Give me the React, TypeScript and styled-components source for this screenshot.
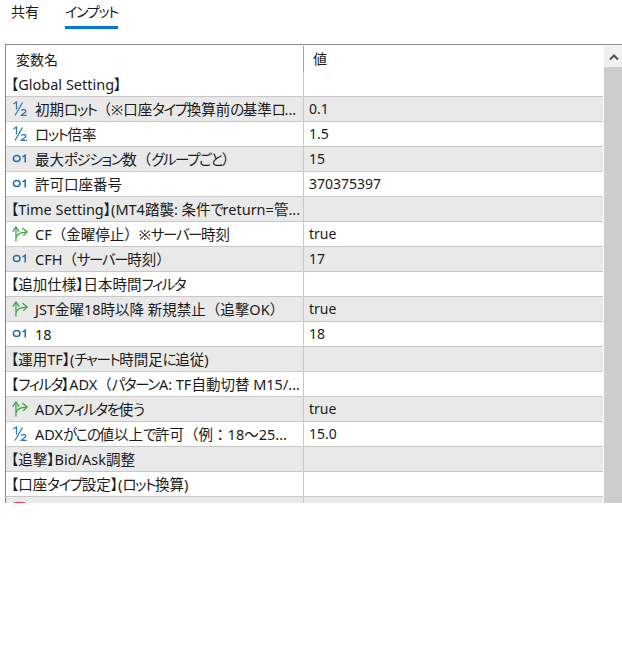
import { createGlobalStyle, styled } from "styled-components";

type IconKind = "half" | "int" | "bool" | "flag" | "none";

interface RowType {
    name: string;
    value?: string;
    icon: IconKind;
}

const rows: RowType[] = [
    { name: "【Global Setting】", icon: "none" },
    { name: "初期ロット（※口座タイプ換算前の基準ロ...", value: "0.1", icon: "half" },
    { name: "ロット倍率", value: "1.5", icon: "half" },
    { name: "最大ポジション数（グループごと）", value: "15", icon: "int" },
    { name: "許可口座番号", value: "370375397", icon: "int" },
    { name: "【Time Setting】(MT4踏襲: 条件でreturn=管...", icon: "none" },
    { name: "CF（金曜停止）※サーバー時刻", value: "true", icon: "bool" },
    { name: "CFH（サーバー時刻）", value: "17", icon: "int" },
    { name: "【追加仕様】日本時間フィルタ", icon: "none" },
    { name: "JST金曜18時以降 新規禁止（追撃OK）", value: "true", icon: "bool" },
    { name: "18", value: "18", icon: "int" },
    { name: "【運用TF】(チャート時間足に追従)", icon: "none" },
    { name: "【フィルタ】ADX（パターンA: TF自動切替 M15/...", icon: "none" },
    { name: "ADXフィルタを使う", value: "true", icon: "bool" },
    { name: "ADXがこの値以上で許可（例：18～25...", value: "15.0", icon: "half" },
    { name: "【追撃】Bid/Ask調整", icon: "none" },
    { name: "【口座タイプ設定】(ロット換算)", icon: "none" },
    { name: "", icon: "flag" },
];

// 仮名は詰めて組む、【】は字幅だけ詰める
const splitKana = (text: string) =>
    text.split(/([\u3040-\u30ff]+|[【】])/).map((part, i) =>
        i % 2 === 1 ? <Kana key={i} $bracket={part === "【" || part === "】"}>{part}</Kana> : part
    );

const RowIcon = ({ kind }: { kind: IconKind }) => {
    if (kind === "half") {
        return (
            <IconSvg viewBox="0 0 16 16" fill="none" stroke="#2a76b8" strokeWidth="1.2">
                <path d="M1.5 3L4.5 1v7.5" />
                <path d="M3 14.5L10.5 1.5" />
                <path d="M9.3 9.5c1-1.4 4.8-1.3 4.5 1-.3 1.3-3.3 2.3-4.5 3.8h5.4" />
            </IconSvg>
        );
    }
    if (kind === "int") {
        return (
            <IconSvg viewBox="0 0 16 16" fill="none" stroke="#1f6fb5" strokeWidth="1.5">
                <ellipse cx="4.7" cy="7.5" rx="3.3" ry="3" />
                <path d="M10.5 5.8l2.7-1.5v7.2" />
            </IconSvg>
        );
    }
    if (kind === "bool") {
        return (
            <IconSvg viewBox="0 0 17 17" fill="none" stroke="#2fa83c" strokeWidth="1.3">
                <path d="M0.8 6l3.4-5 3.4 5" />
                <path d="M4.2 1.5v15" />
                <path d="M4.4 12c1-3.5 4-5.4 11-5.6" />
                <path d="M11 2.2l5.2 4.1-4.2 4" />
            </IconSvg>
        );
    }
    if (kind === "flag") {
        return (
            <IconSvg viewBox="0 0 16 16">
                <rect x="2" y="1" width="11" height="14" fill="#e0474c" />
            </IconSvg>
        );
    }
    return null;
};

export default function App() {
    return (
        <Page>
            <GlobalStyle />
            <Tabs>
                <Tab>共有</Tab>
                <Tab $active>インプット</Tab>
            </Tabs>
            <Panel>
                <Grid>
                    <HeaderRow>
                        <HeaderName>変数名</HeaderName>
                        <HeaderValue>値</HeaderValue>
                    </HeaderRow>
                    {rows.map((row, i) => (
                        <Row key={i} $shaded={i % 2 === 1}>
                            <NameCell $group={row.icon === "none"}>
                                <RowIcon kind={row.icon} />
                                <NameText>{splitKana(row.name)}</NameText>
                            </NameCell>
                            <ValueCell>{row.value}</ValueCell>
                        </Row>
                    ))}
                </Grid>
                <ScrollBar>
                    <ScrollButton>
                        <svg width="10" height="6" viewBox="0 0 10 6" fill="none" stroke="#505050" strokeWidth="2">
                            <path d="M1 5.5L5 1.5l4 4" />
                        </svg>
                    </ScrollButton>
                    <ScrollThumb />
                </ScrollBar>
            </Panel>
        </Page>
    );
}

const GlobalStyle = createGlobalStyle`
    * {
        box-sizing: border-box;
    }
    body {
        margin: 0;
        background: #ffffff;
        font-family: "Noto Sans", "Noto Sans CJK JP", sans-serif;
        color: #1a1a1a;
    }
`;

const Page = styled.div`
    width: 622px;
    height: 658px;
    overflow: hidden;
    background: #ffffff;
`;

const Tabs = styled.div`
    display: flex;
    gap: 26px;
    height: 44px;
    padding-left: 11px;
`;

const Tab = styled.div<{ $active?: boolean }>`
    height: 29px;
    padding-top: 2px;
    font-size: 14px;
    line-height: 20px;
    font-feature-settings: "palt";
    letter-spacing: ${(p) => (p.$active ? "-1.2px" : "0")};
    border-bottom: 3px solid ${(p) => (p.$active ? "#0078d7" : "transparent")};
`;

const Panel = styled.div`
    display: flex;
    width: 617px;
    margin-left: 5px;
    height: 459px;
    overflow: hidden;
    border-top: 1px solid #868a8e;
    border-left: 1px solid #868a8e;
`;

const Grid = styled.div`
    width: 597px;
    flex: none;
`;

const HeaderRow = styled.div`
    display: grid;
    grid-template-columns: 298px 1fr;
    height: 27px;
`;

const HeaderName = styled.div`
    padding: 4px 0 0 10px;
    font-size: 14px;
    line-height: 20px;
    border-right: 1px solid #a0a0a0;
    margin-top: 1px;
`;

const HeaderValue = styled.div`
    padding: 4px 0 0 9px;
    font-size: 14px;
    line-height: 20px;
`;

const Row = styled.div<{ $shaded: boolean }>`
    display: grid;
    grid-template-columns: 298px 1fr;
    height: 25px;
    background: ${(p) => (p.$shaded ? "#e9e9e9" : "#ffffff")};
    border-bottom: 1px solid #c8c8c8;
`;

const NameCell = styled.div<{ $group: boolean }>`
    display: flex;
    align-items: center;
    gap: 7px;
    padding-left: ${(p) => (p.$group ? "5px" : "6px")};
    border-right: 1px solid #c8c8c8;
    white-space: nowrap;
    overflow: hidden;
`;

const NameText = styled.span`
    font-size: 14.5px;
    line-height: 24px;
`;

const Kana = styled.span<{ $bracket: boolean }>`
    font-feature-settings: "palt";
    letter-spacing: ${(p) => (p.$bracket ? "0" : "-1.4px")};
`;

const IconSvg = styled.svg`
    width: 16px;
    height: 16px;
    flex: none;
`;

const ValueCell = styled.div`
    padding-left: 5px;
    font-size: 14px;
    line-height: 24px;
`;

const ScrollBar = styled.div`
    width: 19px;
    margin-left: 1px;
    margin-top: 1px;
    flex: none;
    display: flex;
    flex-direction: column;
`;

const ScrollButton = styled.div`
    height: 21px;
    flex: none;
    background: #f0f0f0;
    display: flex;
    align-items: center;
    justify-content: center;
`;

const ScrollThumb = styled.div`
    flex: 1;
    background: #cdcdcd;
`;
